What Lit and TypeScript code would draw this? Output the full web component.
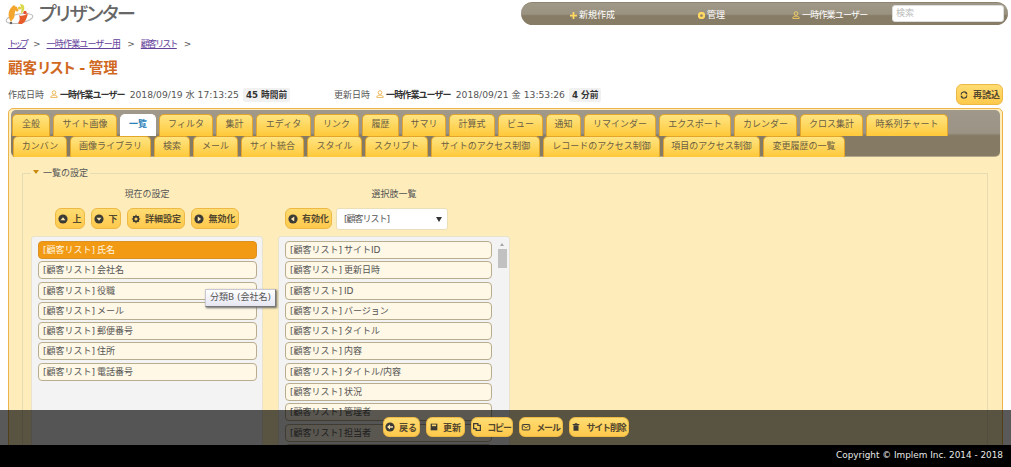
import { LitElement, html, css, svg } from "lit";
import { customElement } from "lit/decorators.js";

const row1: [string, number][] = [["全般",38],["サイト画像",64],["一覧",36],["フィルタ",54],["集計",37],["エディタ",55],["リンク",45],["履歴",37],["サマリ",44],["計算式",46],["ビュー",45],["通知",35],["リマインダー",72],["エクスポート",72],["カレンダー",63],["クロス集計",63],["時系列チャート",82]];
const row2: [string, number][] = [["カンバン",54],["画像ライブラリ",81],["検索",36],["メール",45],["サイト統合",63],["スタイル",55],["スクリプト",63],["サイトのアクセス制御",109],["レコードのアクセス制御",117],["項目のアクセス制御",97],["変更履歴の一覧",82]];
const leftItems = ["氏名","会社名","役職","メール","郵便番号","住所","電話番号"];
const rightItems = ["サイトID","更新日時","ID","バージョン","タイトル","内容","タイトル/内容","状況","管理者","担当者","分類A"];

const dot = (inner: unknown) => html`<svg class="ic" viewBox="0 0 12 12">${inner}</svg>`;
const circ = svg`<circle cx="6" cy="6" r="5.5" fill="#3c3a34"/>`;
const icons: Record<string, unknown> = {
  up: dot(svg`${circ}<path d="M3 7.5 6 4l3 3.500z" fill="#ffe9b0"/>`),
  down: dot(svg`${circ}<path d="M3 4.500 6 8l3-3.500z" fill="#ffe9b0"/>`),
  gear: dot(svg`<circle cx="6" cy="6" r="2.900" fill="none" stroke="#3c3a34" stroke-width="2"/><path d="M6 1v2M6 9v2M1 6h2M9 6h2M2.500 2.500 4 4M8 8l1.500 1.500M2.500 9.500 4 8M8 4l1.500-1.500" stroke="#3c3a34" stroke-width="1.300"/>`),
  right: dot(svg`${circ}<path d="M4.500 3 8.500 6l-4 3z" fill="#ffe9b0"/>`),
  left: dot(svg`${circ}<path d="M7.500 3 3.500 6l4 3z" fill="#ffe9b0"/>`),
  back: dot(svg`${circ}<path d="M2.500 6 6 3v2h3.500v2H6v2z" fill="#ffe9b0"/>`),
  save: dot(svg`<path d="M2 2h8v8H2z" fill="#3c3a34"/><path d="M3.500 3h5v2h-5z" fill="#ffd76a"/>`),
  copy: dot(svg`<path d="M2 2h5v2h3v6H5V8H2z" fill="none" stroke="#3c3a34" stroke-width="1.500"/>`),
  mail: dot(svg`<rect x="1.500" y="3" width="9" height="6.500" rx="1" fill="none" stroke="#3c3a34" stroke-width="1.200"/><path d="M2 4l4 3 4-3" fill="none" stroke="#3c3a34"/>`),
  trash: dot(svg`<path d="M3 4h6v6.500H3zM2 2.500h8v1H2zM4.500 1.500h3v1h-3z" fill="#3c3a34"/>`),
  reload: dot(svg`<path d="M9.500 6.500A3.500 3.500 0 0 1 3 8M2.500 5.500A3.500 3.500 0 0 1 9 4" fill="none" stroke="#3c3a34" stroke-width="1.300"/><path d="M8 1.500v3.500h2.500zM4 10.500V7H1.500z" fill="#3c3a34"/>`),
};

const user = html`<svg class="user" viewBox="0 0 10 10"><circle cx="5" cy="3.200" r="2.300" fill="none" stroke="currentColor"/><path d="M1 9.300h8V8L6.500 6.500h-3L1 8z" fill="none" stroke="currentColor"/></svg>`;

@customElement("app-root")
export class AppRoot extends LitElement {
  static styles = css`
    :host { display: block; position: relative; width: 1011px; height: 467px; overflow: hidden; background: #fff;
      font: 9px "DejaVu Sans", "Noto Sans CJK JP", sans-serif; color: #555; }
    * { box-sizing: border-box; }
    .head { display: flex; justify-content: space-between; height: 37px; padding: 2px 3px 0 5px; }
    .brand { display: flex; align-items: flex-start; gap: 4px; font-size: 19px; font-weight: 500; color: #666; line-height: 25px; letter-spacing: -3.200px; }
    .logo { width: 29px; height: 22px; margin-top: 1px; }
    .nav { width: 487px; height: 23px; border-radius: 12px; display: flex; align-items: center; color: #fff; position: relative;
      background: linear-gradient(#a09887 0, #9b9382 50%, #877c66 58%, #877c66 100%); border-top: 1px solid #8e8471; }
    .nav span { position: absolute; top: 5px; display: flex; align-items: center; gap: 2px; line-height: 14px; white-space: nowrap; font-size: 9px; }
    .nav .n1 { left: 49px; } .nav .n2 { left: 177px; } .nav .n3 { left: 271px; letter-spacing: -.8px; }
    .nav svg { color: #ffd862; fill: #ffd862; }
    .search { position: absolute; left: 371px; top: 2px; width: 112px; height: 17px; background: #fff; border: 1px solid #ddd; border-radius: 3px; color: #bbb; padding-left: 3px; line-height: 15px; font-size: 9px; }
    .crumbs { display: flex; height: 14px; padding-left: 8px; line-height: 14px; font-size: 9px; }
    .crumbs a { color: #63409a; text-decoration: underline; }
    .crumbs .a1 { letter-spacing: -3px; }
    .crumbs .a2 { letter-spacing: -.8px; }
    .crumbs .a3 { letter-spacing: -1.800px; }
    .crumbs i { font-style: normal; margin: 0 6px 0 7px; }
    h1 { margin: 0; padding: 8px 0 0 8px; height: 31px; font-size: 14.500px; line-height: 18px; font-weight: 700; color: #d0691f; word-spacing: -1.500px; }
    h1 span { letter-spacing: -2.300px; margin-right: 2px; }
    .info { display: flex; align-items: center; height: 26px; padding: 0 8px; position: relative; line-height: 14px; }
    .info b { color: #333; font-weight: 700; letter-spacing: -.9px; }
    .user { width: 8px; height: 8px; color: #e8a93a; margin: 0 2px 2px 6px; flex: none; }
    .badge { background: #f1f1f1; border-radius: 2px; padding: 0 3px; margin-left: 4px; color: #333; font-weight: 700; font-size: 8.700px; }
    .date { margin-left: 5px; font-size: 9.200px; }
    .gap { width: 44px; }
    .reload { position: absolute; right: 8px; top: 2px; }
    .btn { display: inline-flex; align-items: center; justify-content: center; gap: 4px; height: 21px; border-radius: 6px; border: 1px solid #edb844; background: linear-gradient(#ffdc72, #fec94c); color: #54482e; font-weight: 700; white-space: nowrap; font-size: 9px; }
    .btn.kana { letter-spacing: -1.200px; gap: 5px; }
    .ic { width: 10px; height: 10px; flex: none; }
    .main { margin: 0 8px; height: 400px; background: #feedbb; border: 1px solid #ebb44c; border-radius: 5px; padding: 0 2px; }
    .tabs { margin-top: 1px; height: 47px; padding: 4px 0 0 1px; border-radius: 5px; background: linear-gradient(#a0988a 0, #9b9384 50%, #857a64 56%, #857a64 100%); border-bottom: 1px solid #b5a78a; }
    .tabrow { display: flex; gap: 3px; height: 21.500px; }
    .tabrow + .tabrow { padding-left: 1px; }
    .tab { flex: none; height: 21.500px; border-radius: 5px 5px 0 0; border: 1px solid #e3a52a; border-bottom-width: 0; background: linear-gradient(#ffe482, #fec93a); color: #6a5d44; text-align: center; line-height: 19px; font-size: 9px; white-space: nowrap; }
    .tab.on { background: #fff; border-color: #fff; color: #2c81b8; font-weight: 700; }
    fieldset { margin: 10px 0 0 11px; padding: 0 8px; width: 966px; height: 340px; border: 1px solid #e6dcb4; min-width: 0; }
    legend { margin-left: 0; padding: 0 2px; line-height: 12px; display: flex; align-items: center; gap: 4px; }
    legend::before { content: ""; width: 0; height: 0; border: 3px solid transparent; border-top: 4px solid #c98a10; border-bottom: 0; margin-bottom: 3px; }
    .cols { display: flex; gap: 15px; }
    .col { width: 232px; }
    .ttl { text-align: center; height: 15px; line-height: 14px; margin-top: 8px; }
    .bar { display: flex; height: 22px; margin-top: 6px; gap: 6px; justify-content: center; }
    .bar.r { justify-content: flex-start; padding-left: 7px; gap: 4px; }
    .select { width: 112px; height: 22px; background: #fff; border: 1px solid #eadfb9; border-radius: 3px; padding-left: 7px; line-height: 20px; position: relative; letter-spacing: -1px; }
    .select::after { content: ""; position: absolute; right: 5px; top: 8px; border: 3px solid transparent; border-top: 5px solid #333; border-bottom: 0; }
    .panel { position: relative; height: 240px; margin-top: 6px; background: #f3f3f3; border: 1px solid #e9e2cc; border-radius: 3px; padding: 4px 5px 0 6px; display: flex; flex-direction: column; gap: 2.300px; overflow: hidden; }
    .panel.r { padding-right: 17px; }
    .item { flex: none; height: 18px; border: 1px solid #b9ad90; border-radius: 4px; background: #fff8e6; padding-left: 4px; line-height: 17px; white-space: nowrap; word-spacing: -1px; }
    .item.sel { background: #f29a14; border-color: #dc9222; color: #fff6e0; }
    .sb { position: absolute; top: 1px; right: 1px; width: 11px; height: 40px; }
    .sb::before { content: ""; position: absolute; left: 3px; top: 5px; border: 2.500px solid transparent; border-bottom: 3px solid #a5a5a5; border-top: 0; }
    .sb::after { content: ""; position: absolute; left: 1px; top: 11px; width: 9px; height: 19px; background: #c1c1c1; }
    .tip { position: absolute; left: 205px; top: 289px; width: 71px; height: 18px; padding-left: 4px; line-height: 15px; background: linear-gradient(#fff, #e6e6f2); border: 1px solid #c9c9d4; border-right-color: #777; border-bottom-color: #777; box-shadow: 1px 1px 2px #666; color: #555; white-space: nowrap; }
    .over { position: absolute; left: 0; right: 0; top: 410px; height: 35px; background: rgba(0,0,0,.65); display: flex; justify-content: center; align-items: flex-start; padding-top: 7px; gap: 6px; }
    .over .btn { height: 20px; }
    .foot { position: absolute; left: 0; right: 0; top: 445px; height: 22px; background: #000; color: #e8e8e8; text-align: right; padding-right: 8px; line-height: 20px; font-size: 8.900px; }
  `;

  private btn(icon: string, label: string, w: number, cls = "") {
    return html`<span class="btn ${cls}" style="width:${w}px">${icons[icon]}${label}</span>`;
  }

  render() {
    const tabs = (r: [string, number][]) => r.map(([t, w]) => html`<div class="tab ${t === "一覧" ? "on" : ""}" style="width:${w}px">${t}</div>`);
    return html`
      <div class="head">
        <div class="brand">
          <svg class="logo" viewBox="0 0 29 22">
            <ellipse cx="14.500" cy="15.500" rx="13.500" ry="4.500" fill="none" stroke="#bdbdbd" stroke-width="1.100" transform="rotate(-10 14.500 15.500)"/>
            <path d="M9 2C3 6 2 13 6 19c1-2 2-3 3-4 1-2 0-6 2-8 1-1 2-1 1-3-1 0-2-1-3-2z" fill="#f3a52e"/>
            <circle cx="12" cy="7" r="1.500" fill="#f3a52e"/>
            <path d="M15 1c4 0 5 3 4 6-1 2-2 3-3 4 0-3 1-5 0-7z" fill="#d8d848"/>
            <circle cx="14.500" cy="5" r="1.600" fill="#e8c83a"/>
            <circle cx="20" cy="9.500" r="1.700" fill="#e8502a"/>
            <path d="M14 12c2 2 7 0 9-2-1 4-2 9-6 11-2 0-4 0-4-1 2-2 2-5 1-8z" fill="#e85c2a"/>
            <circle cx="6" cy="20" r="1.300" fill="#666"/>
          </svg>
          プリザンター
        </div>
        <div class="nav">
          <span class="n1"><svg class="ic" style="width:7px;height:7px" viewBox="0 0 8 8"><path d="M3 0h2v3h3v2H5v3H3V5H0V3h3z"/></svg>新規作成</span>
          <span class="n2"><svg class="ic" style="width:7px;height:7px" viewBox="0 0 8 8"><path d="M2 0h4l2 2v4L6 8H2L0 6V2zM4 2.500a1.500 1.500 0 1 0 .01 0z" fill-rule="evenodd"/></svg>管理</span>
          <span class="n3"><svg class="ic" style="width:8px;height:8px" viewBox="0 0 10 10"><circle cx="5" cy="3.200" r="2.300" fill="none" stroke="#ffd862"/><path d="M1 9.300h8V8L6.500 6.500h-3L1 8z" fill="none" stroke="#ffd862"/></svg>一時作業ユーザー</span>
          <div class="search">検索</div>
        </div>
      </div>
      <div class="crumbs"><a class="a1">トップ</a><i>&gt;</i><a class="a2">一時作業ユーザー用</a><i>&gt;</i><a class="a3">顧客リスト</a><i>&gt;</i></div>
      <h1>顧客<span>リスト</span> - 管理</h1>
      <div class="info">
        <span>作成日時</span>${user}<b>一時作業ユーザー</b><span class="date">2018/09/19 水 17:13:25</span><span class="badge">45 時間前</span>
        <span class="gap"></span>
        <span>更新日時</span>${user}<b>一時作業ユーザー</b><span class="date">2018/09/21 金 13:53:26</span><span class="badge">4 分前</span>
        <span class="reload">${this.btn("reload", "再読込", 47)}</span>
      </div>
      <div class="main">
        <div class="tabs">
          <div class="tabrow">${tabs(row1)}</div>
          <div class="tabrow">${tabs(row2)}</div>
        </div>
        <fieldset>
          <legend>一覧の設定</legend>
          <div class="cols">
            <div class="col">
              <div class="ttl">現在の設定</div>
              <div class="bar">
                ${this.btn("up", "上", 30)}${this.btn("down", "下", 30)}${this.btn("gear", "詳細設定", 58)}${this.btn("right", "無効化", 48)}
              </div>
              <div class="panel">
                ${leftItems.map((t, i) => html`<div class="item ${i === 0 ? "sel" : ""}">[顧客リスト] ${t}</div>`)}
              </div>
            </div>
            <div class="col">
              <div class="ttl">選択肢一覧</div>
              <div class="bar r">
                ${this.btn("left", "有効化", 47)}
                <div class="select">[顧客リスト]</div>
              </div>
              <div class="panel r">
                ${rightItems.map((t) => html`<div class="item">[顧客リスト] ${t}</div>`)}
                <div class="sb"></div>
              </div>
            </div>
          </div>
        </fieldset>
      </div>
      <div class="tip">分類B (会社名)</div>
      <div class="over">
        ${this.btn("back", "戻る", 37)}${this.btn("save", "更新", 39)}${this.btn("copy", "コピー", 42, "kana")}${this.btn("mail", "メール", 44, "kana")}${this.btn("trash", "サイト削除", 60, "kana")}
      </div>
      <div class="foot">Copyright © Implem Inc. 2014 - 2018</div>
    `;
  }
}
